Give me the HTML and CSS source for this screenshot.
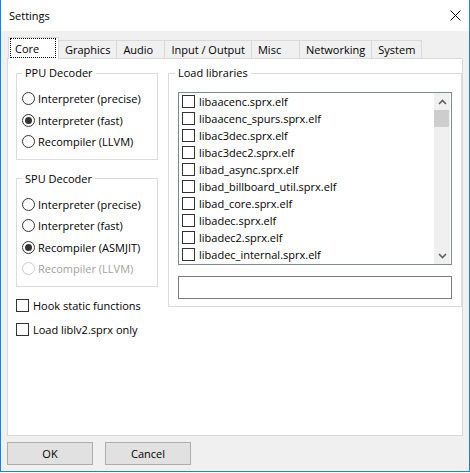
FILE: index.html
```html
<!DOCTYPE html>
<html>
<head>
<meta charset="utf-8">
<title>Settings</title>
<link rel="stylesheet" href="styles.css">
</head>
<body>
<div class="window">
  <div class="titlebar">
    <span class="title">Settings</span>
    <svg class="close" width="11" height="11" viewBox="0 0 11 11"><path d="M0.5 0.5 L10.5 10.5 M10.5 0.5 L0.5 10.5" stroke="#000" stroke-width="1" fill="none"/></svg>
  </div>
  <div class="client">
    <div class="tabs">
      <div class="tab active"><span class="focus">Core</span></div>
      <div class="tab">Graphics</div>
      <div class="tab">Audio</div>
      <div class="tab">Input / Output</div>
      <div class="tab">Misc</div>
      <div class="tab">Networking</div>
      <div class="tab">System</div>
    </div>
    <div class="pane">
      <div class="col-left">
        <fieldset class="group">
          <legend>PPU Decoder</legend>
          <label class="opt"><span class="radio"></span>Interpreter (precise)</label>
          <label class="opt"><span class="radio on"></span>Interpreter (fast)</label>
          <label class="opt"><span class="radio"></span>Recompiler (LLVM)</label>
        </fieldset>
        <fieldset class="group spu">
          <legend>SPU Decoder</legend>
          <label class="opt"><span class="radio"></span>Interpreter (precise)</label>
          <label class="opt"><span class="radio"></span>Interpreter (fast)</label>
          <label class="opt"><span class="radio on"></span>Recompiler (ASMJIT)</label>
          <label class="opt disabled"><span class="radio"></span>Recompiler (LLVM)</label>
        </fieldset>
        <label class="check first"><span class="box"></span>Hook static functions</label>
        <label class="check"><span class="box"></span>Load liblv2.sprx only</label>
      </div>
      <fieldset class="group libs">
        <legend>Load libraries</legend>
        <div class="listbox">
          <div class="items">
            <div class="item"><span class="box"></span>libaacenc.sprx.elf</div>
            <div class="item"><span class="box"></span>libaacenc_spurs.sprx.elf</div>
            <div class="item"><span class="box"></span>libac3dec.sprx.elf</div>
            <div class="item"><span class="box"></span>libac3dec2.sprx.elf</div>
            <div class="item"><span class="box"></span>libad_async.sprx.elf</div>
            <div class="item"><span class="box"></span>libad_billboard_util.sprx.elf</div>
            <div class="item"><span class="box"></span>libad_core.sprx.elf</div>
            <div class="item"><span class="box"></span>libadec.sprx.elf</div>
            <div class="item"><span class="box"></span>libadec2.sprx.elf</div>
            <div class="item"><span class="box"></span>libadec_internal.sprx.elf</div>
          </div>
          <div class="scrollbar">
            <div class="arrow"><svg width="9" height="6" viewBox="0 0 9 6"><path d="M1 5 L4.5 1.5 L8 5" stroke="#606060" stroke-width="1.6" fill="none"/></svg></div>
            <div class="thumb"></div>
            <div class="track"></div>
            <div class="arrow"><svg width="9" height="6" viewBox="0 0 9 6"><path d="M1 1 L4.5 4.5 L8 1" stroke="#606060" stroke-width="1.6" fill="none"/></svg></div>
          </div>
        </div>
        <div class="lineedit"></div>
      </fieldset>
    </div>
    <div class="buttons">
      <button class="btn">OK</button>
      <button class="btn">Cancel</button>
    </div>
  </div>
</div>
</body>
</html>
```
FILE: styles.css
```css
html, body {
  margin: 0;
  background: #fff;
}
body {
  font-family: "Open Sans", "Noto Sans", sans-serif;
  font-size: 11px;
  color: #000;
}
.window {
  width: 470px;
  height: 472px;
  box-sizing: border-box;
  border: 1px solid #1883d7;
  border-top: none;
  display: flex;
  flex-direction: column;
}
.titlebar {
  height: 31px;
  flex: none;
  display: flex;
  align-items: center;
  justify-content: space-between;
  padding: 0 8px;
  background: #fff;
}
.title {
  line-height: 16px;
}
.close {
  display: block;
}
.client {
  flex: 1;
  background: #f0f0f0;
  padding: 6px;
  display: flex;
  flex-direction: column;
  min-height: 0;
}
.tabs {
  display: flex;
  align-items: flex-end;
  height: 21px;
  padding-left: 1px;
  flex: none;
}
.tab {
  height: 18px;
  box-sizing: border-box;
  border: 1px solid #d9d9d9;
  border-bottom: none;
  margin-left: -1px;
  padding: 0 6px 0 6px;
  min-width: 49px;
  line-height: 17px;
  background: #f0f0f0;
  white-space: nowrap;
}
.tab.active {
  height: 22px;
  min-width: 51px;
  margin-left: 0;
  margin-bottom: -1px;
  padding: 0 2px 1px 1px;
  background: #fff;
  position: relative;
  z-index: 1;
  display: flex;
}
.focus {
  flex: 1;
  display: flex;
  align-items: center;
  height: 20px;
  box-sizing: border-box;
  padding-left: 4px;
  border: 1px dotted #000;
}
.pane {
  flex: 1;
  min-height: 0;
  background: #fff;
  border: 1px solid #d9d9d9;
  display: flex;
  gap: 10px;
  padding: 7px 0 0 8px;
  align-items: flex-start;
}
.col-left {
  width: 142px;
  flex: none;
  display: flex;
  flex-direction: column;
}
.group {
  margin: 0;
  border: 1px solid #dcdcdc;
  padding: 8px 5px 6px 5px;
  min-width: 0;
}
.group legend {
  padding: 0 3px;
  line-height: 14px;
}
.spu {
  margin-top: 12px;
}
.opt {
  display: flex;
  align-items: center;
  height: 21.5px;
  gap: 3px;
  white-space: nowrap;
}
.radio {
  width: 13px;
  height: 13px;
  box-sizing: border-box;
  border: 1px solid #333;
  border-radius: 50%;
  background: #fff;
  display: flex;
  align-items: center;
  justify-content: center;
  flex: none;
}
.radio.on::after {
  content: "";
  width: 7px;
  height: 7px;
  border-radius: 50%;
  background: #333;
}
.opt.disabled {
  color: #a0a0a0;
}
.opt.disabled .radio {
  border-color: #cccccc;
}
.check {
  display: flex;
  align-items: center;
  height: 24px;
  gap: 4px;
  white-space: nowrap;
}
.check.first {
  margin-top: 7px;
}
.box {
  width: 13px;
  height: 13px;
  box-sizing: border-box;
  border: 1px solid #333;
  background: #fff;
  flex: none;
}
.libs {
  width: 294px;
  box-sizing: border-box;
  flex: none;
  padding: 12px 9px 7px 9px;
}
.libs legend {
  margin-left: -3px;
}
.listbox {
  height: 173px;
  box-sizing: border-box;
  border: 1px solid #828790;
  background: #fff;
  display: flex;
}
.items {
  flex: 1;
  overflow: hidden;
  padding-left: 3px;
}
.item {
  height: 17px;
  display: flex;
  align-items: center;
  gap: 4px;
  white-space: nowrap;
}
.scrollbar {
  width: 16px;
  margin-right: 1px;
  background: #f0f0f0;
  display: flex;
  flex-direction: column;
  flex: none;
}
.arrow {
  height: 17px;
  display: flex;
  align-items: center;
  justify-content: center;
  flex: none;
}
.arrow svg {
  display: block;
}
.thumb {
  height: 17px;
  width: 15px;
  background: #cdcdcd;
  flex: none;
}
.track {
  flex: 1;
}
.lineedit {
  margin-top: 11px;
  height: 23px;
  box-sizing: border-box;
  border: 1px solid #7a7a7a;
  background: #fff;
}
.buttons {
  display: flex;
  gap: 12px;
  margin-top: 6px;
  flex: none;
}
.btn {
  width: 86px;
  height: 23px;
  box-sizing: border-box;
  background: #e1e1e1;
  border: 1px solid #adadad;
  font: inherit;
  color: #000;
  padding: 0;
}
```
